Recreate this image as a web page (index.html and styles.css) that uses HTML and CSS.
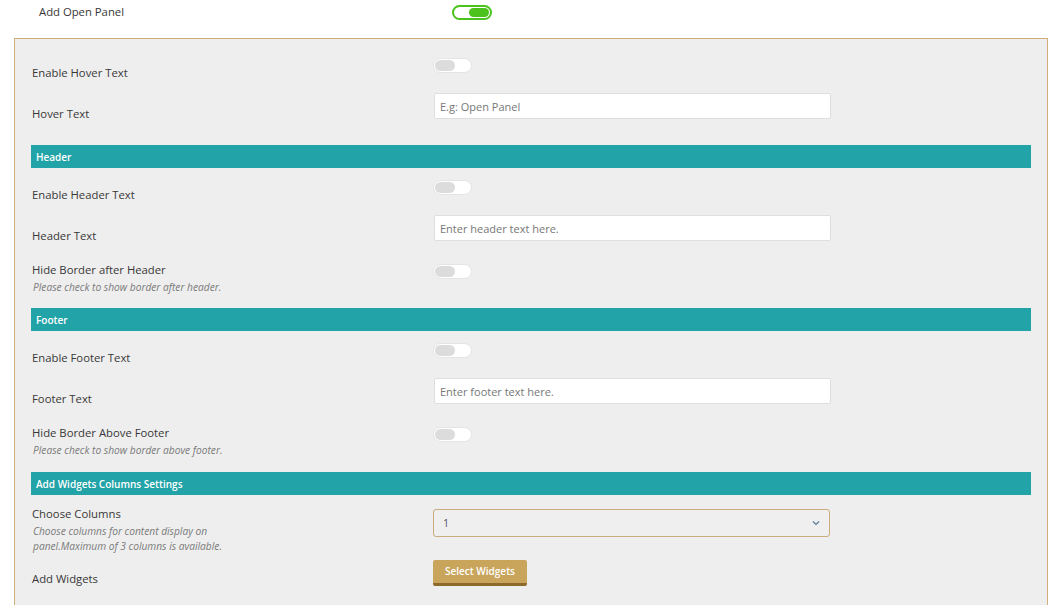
FILE: index.html
```html
<!DOCTYPE html>
<html>
<head>
<meta charset="utf-8">
<link rel="stylesheet" href="styles.css">
</head>
<body>
<div class="top-row">
  <span class="top-label">Add Open Panel</span>
  <span class="switch on"></span>
</div>
<div class="panel">
  <div class="row row-toggle">
    <div class="label">Enable Hover Text</div>
    <div class="control"><span class="switch"></span></div>
  </div>
  <div class="row row-input">
    <div class="label">Hover Text</div>
    <div class="control"><input class="text" type="text" placeholder="E.g: Open Panel"></div>
  </div>

  <div class="bar first">Header</div>
  <div class="row row-toggle">
    <div class="label">Enable Header Text</div>
    <div class="control"><span class="switch"></span></div>
  </div>
  <div class="row row-input">
    <div class="label">Header Text</div>
    <div class="control"><input class="text" type="text" placeholder="Enter header text here."></div>
  </div>
  <div class="row row-desc">
    <div class="label">Hide Border after Header<div class="desc">Please check to show border after header.</div></div>
    <div class="control"><span class="switch"></span></div>
  </div>

  <div class="bar">Footer</div>
  <div class="row row-toggle">
    <div class="label">Enable Footer Text</div>
    <div class="control"><span class="switch"></span></div>
  </div>
  <div class="row row-input">
    <div class="label">Footer Text</div>
    <div class="control"><input class="text" type="text" placeholder="Enter footer text here."></div>
  </div>
  <div class="row row-desc tall">
    <div class="label">Hide Border Above Footer<div class="desc">Please check to show border above footer.</div></div>
    <div class="control"><span class="switch"></span></div>
  </div>

  <div class="bar">Add Widgets Columns Settings</div>
  <div class="row row-select">
    <div class="label">Choose Columns<div class="desc narrow">Choose columns for content display on panel.Maximum of 3 columns is available.</div></div>
    <div class="control">
      <div class="select"><span>1</span>
        <svg class="chev" width="8" height="6" viewBox="0 0 8 6"><path d="M1 1.5 L4 4.5 L7 1.5" fill="none" stroke="#5a7a96" stroke-width="1.2"/></svg>
      </div>
    </div>
  </div>
  <div class="row row-button">
    <div class="label">Add Widgets</div>
    <div class="control"><button class="btn">Select Widgets</button></div>
  </div>
</div>
</body>
</html>
```
FILE: styles.css
```css
* { box-sizing: border-box; }
html, body { margin: 0; padding: 0; background: #fff; }
body {
  font-family: "Open Sans", "Noto Sans", sans-serif;
  color: #383838;
  font-size: 11.3px;
}
.top-row {
  height: 38px;
  display: flex;
  align-items: flex-start;
  padding-left: 38px;
}
.top-label {
  width: 414px;
  line-height: 16px;
  padding-top: 4px;
  padding-left: 1px;
}
.top-row .switch { margin-top: 5px; }

.panel {
  margin-left: 14px;
  width: 1034px;
  border: 1px solid #cfae7c;
  border-bottom: none;
  background: #eeeeee;
  padding: 7px 16px 40px 16px;
}
.row {
  display: grid;
  grid-template-columns: 402px 398px;
}
.label { line-height: 16px; padding-left: 1px; }
.control { padding-top: 12px; }
.row-toggle { height: 35px; }
.row-toggle .label { padding-top: 19px; }
.row-input { height: 49px; }
.row-input .label { padding-top: 25px; }
.row-desc { height: 56px; }
.row-desc.tall { height: 57px; }
.row-desc .label { padding-top: 10px; padding-left: 1px; }
.row-select { height: 56px; }
.row-select .label { padding-top: 11px; }
.row-select .control { padding-top: 14px; }
.row-button { height: 60px; }
.row-button .label { padding-top: 20px; }
.row-button .control { padding-top: 9px; }

.desc {
  font-style: italic;
  color: #7a7a7a;
  font-size: 10.2px;
  line-height: 15px;
  margin-top: 2px;
  padding-left: 1px;
}
.desc.narrow { max-width: 200px; }

.bar {
  height: 23px;
  line-height: 22px;
  padding-top: 1px;
  background: #22a3a8;
  color: #fff;
  font-weight: 600;
  font-size: 10px;
  padding-left: 5px;
}
.bar.first { margin-top: 15px; }

.switch {
  display: inline-block;
  position: relative;
  width: 39px;
  height: 15px;
  border-radius: 8px;
  background: #fff;
  border: 1px solid #e4e4e4;
  vertical-align: top;
}
.switch::after {
  content: "";
  position: absolute;
  left: 1px;
  top: 1px;
  width: 20px;
  height: 11px;
  border-radius: 6px;
  background: #dcdcdc;
}
.switch.on {
  border: 2px solid #4cc21c;
  width: 40px;
}
.switch.on::after {
  left: auto;
  right: 1px;
  top: 1px;
  width: 20px;
  height: 9px;
  background: #4cc21c;
}

.text {
  display: block;
  width: 397px;
  height: 26px;
  margin-left: 1px;
  border: 1px solid #dedede;
  border-radius: 2px;
  background: #fff;
  font-family: "Open Sans", "Noto Sans", sans-serif;
  font-size: 11px;
  color: #555;
  padding: 0 5px;
  outline: none;
}
.text::placeholder { color: #777; }

.select {
  position: relative;
  width: 397px;
  height: 28px;
  border: 1px solid #c9ad7c;
  border-radius: 3px;
  background: #efefef;
  font-size: 10.6px;
  color: #556;
  line-height: 26px;
  padding-left: 9px;
}
.chev { position: absolute; right: 9px; top: 10px; }

.btn {
  display: block;
  width: 94px;
  height: 26px;
  border: none;
  border-bottom: 3px solid #8c6a2a;
  border-radius: 2px;
  background: #c9a55c;
  color: #fff;
  font-family: "Open Sans", "Noto Sans", sans-serif;
  font-weight: 600;
  font-size: 10px;
  padding: 0;
  line-height: 23px;
}
```
